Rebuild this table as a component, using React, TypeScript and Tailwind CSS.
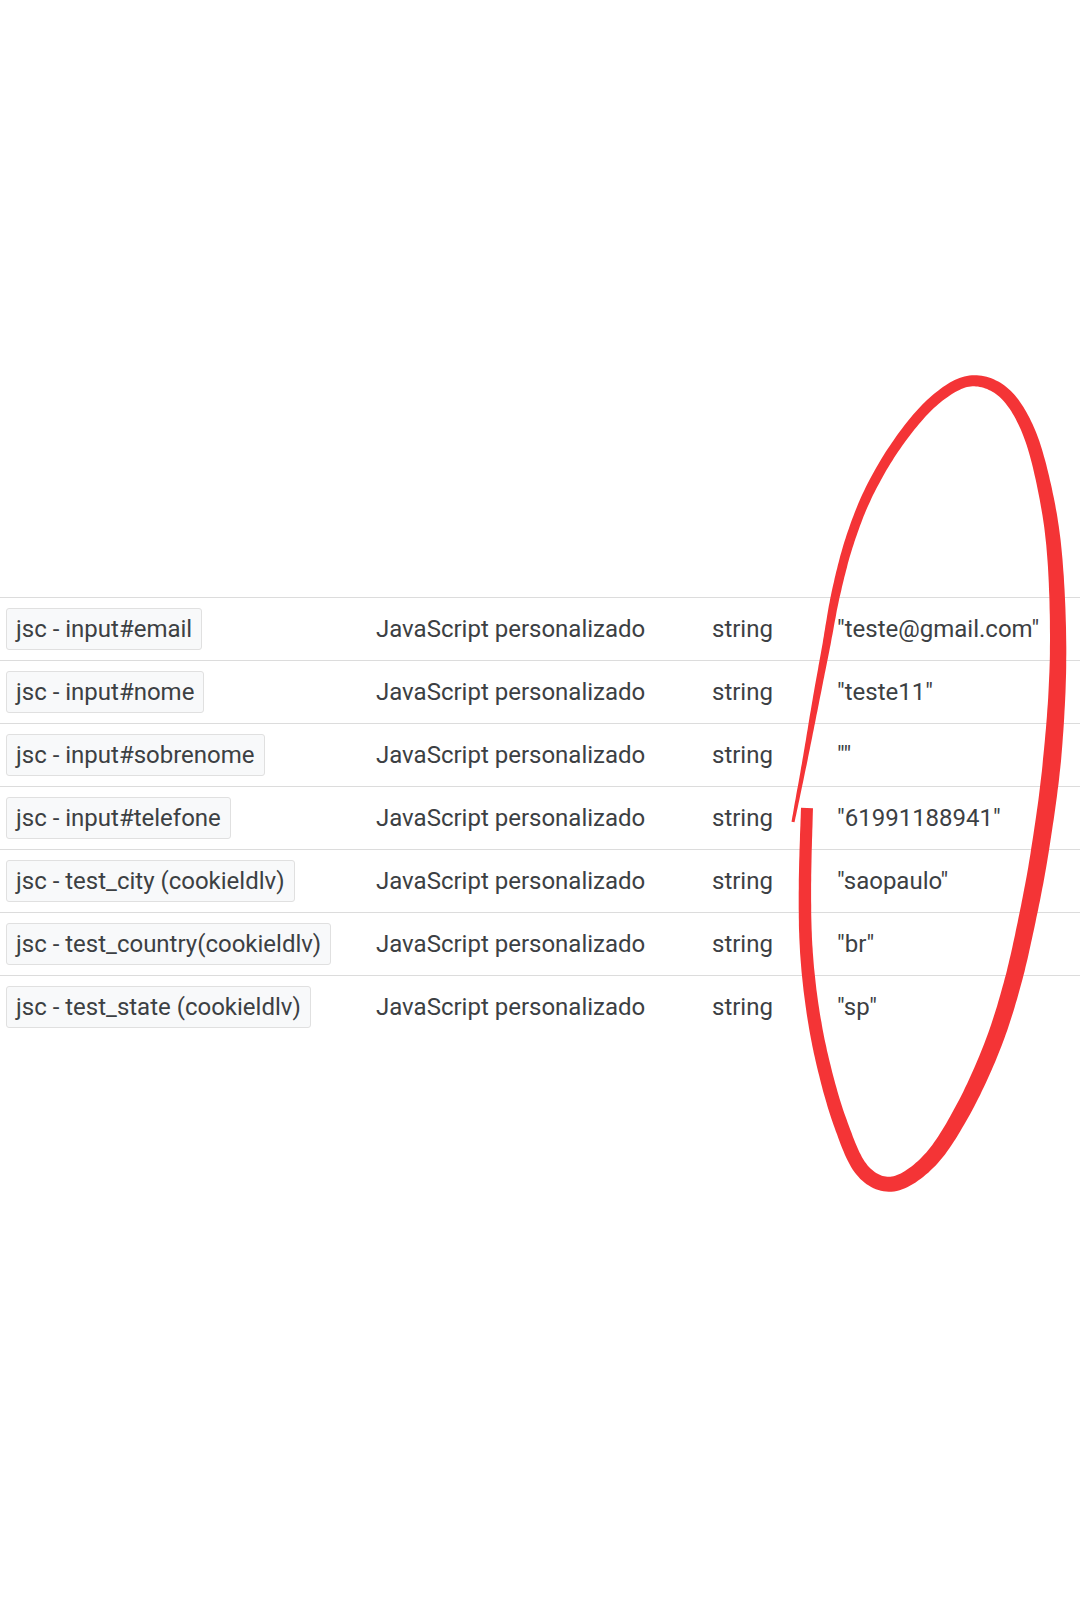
import React from 'react';

type Row = { name: string; type: string; format: string; value: string };

const ROWS: Row[] = [
  { name: 'jsc - input#email', type: 'JavaScript personalizado', format: 'string', value: '"teste@gmail.com"' },
  { name: 'jsc - input#nome', type: 'JavaScript personalizado', format: 'string', value: '"teste11"' },
  { name: 'jsc - input#sobrenome', type: 'JavaScript personalizado', format: 'string', value: '""' },
  { name: 'jsc - input#telefone', type: 'JavaScript personalizado', format: 'string', value: '"61991188941"' },
  { name: 'jsc - test_city (cookieldlv)', type: 'JavaScript personalizado', format: 'string', value: '"saopaulo"' },
  { name: 'jsc - test_country(cookieldlv)', type: 'JavaScript personalizado', format: 'string', value: '"br"' },
  { name: 'jsc - test_state (cookieldlv)', type: 'JavaScript personalizado', format: 'string', value: '"sp"' },
];

// centre line of the hand-drawn loop, full page coordinates
const LOOP: [number, number][] = [
  [793, 822], [805, 760], [816, 700], [826, 647], [836, 593], [850, 540], [870, 490], [900, 440],
  [935, 400], [970, 381], [1003, 392], [1028, 430], [1045, 490], [1055, 560], [1058, 660], [1052, 760],
  [1040, 850], [1027, 920], [1012, 985], [992, 1047], [963, 1110], [930, 1160], [893, 1184], [862, 1170],
  [840, 1122], [823, 1063], [812, 1005], [806, 945], [805, 880], [807, 808],
];

// stroke width at given point index
const WIDTHS: [number, number][] = [
  [0, 3], [2, 7], [4, 9], [6, 10], [9, 11], [13, 15], [15, 18], [19, 17], [22, 15], [26, 13], [29, 12],
];

function widthAt(s: number) {
  for (let i = 0; i < WIDTHS.length - 1; i++) {
    const [a, wa] = WIDTHS[i];
    const [b, wb] = WIDTHS[i + 1];
    if (s >= a && s <= b) return wa + ((s - a) / (b - a)) * (wb - wa);
  }
  return WIDTHS[WIDTHS.length - 1][1];
}

function loopPath() {
  const pts: { x: number; y: number; s: number }[] = [];
  const n = LOOP.length;
  const get = (i: number) => LOOP[Math.max(0, Math.min(n - 1, i))];
  for (let i = 0; i < n - 1; i++) {
    const p0 = get(i - 1), p1 = get(i), p2 = get(i + 1), p3 = get(i + 2);
    const steps = 16;
    for (let k = 0; k < steps; k++) {
      const t = k / steps;
      const t2 = t * t, t3 = t2 * t;
      const f = (a: number, b: number, c: number, d: number) =>
        0.5 * (2 * b + (-a + c) * t + (2 * a - 5 * b + 4 * c - d) * t2 + (-a + 3 * b - 3 * c + d) * t3);
      pts.push({ x: f(p0[0], p1[0], p2[0], p3[0]), y: f(p0[1], p1[1], p2[1], p3[1]), s: i + t });
    }
  }
  pts.push({ x: LOOP[n - 1][0], y: LOOP[n - 1][1], s: n - 1 });

  const left: string[] = [];
  const right: string[] = [];
  pts.forEach((p, i) => {
    const a = pts[Math.max(0, i - 2)];
    const b = pts[Math.min(pts.length - 1, i + 2)];
    const dx = b.x - a.x, dy = b.y - a.y;
    const len = Math.hypot(dx, dy) || 1;
    const nx = -dy / len, ny = dx / len;
    const w = widthAt(p.s) / 2;
    left.push(`${(p.x + nx * w).toFixed(1)},${(p.y + ny * w).toFixed(1)}`);
    right.unshift(`${(p.x - nx * w).toFixed(1)},${(p.y - ny * w).toFixed(1)}`);
  });
  return `M${left.join(' L')} L${right.join(' L')} Z`;
}

export default function App() {
  return (
    <div className="relative w-[1080px] h-[1620px] bg-white overflow-hidden font-['Roboto','Liberation_Sans',sans-serif] text-[#3c4043]">
      <div className="pt-[597px]">
        {ROWS.map((r) => (
          <div key={r.name} className="grid grid-cols-[376px_336px_125px_1fr] items-center h-[63px] border-t border-[#dcdcdc] text-[24px]">
            <div className="pl-[6px]">
              <span className="inline-flex items-center h-[42px] px-[9px] bg-[#f8f9fa] border border-[#e0e0e0] rounded-[3px] whitespace-nowrap">
                {r.name}
              </span>
            </div>
            <div className="whitespace-nowrap">{r.type}</div>
            <div>{r.format}</div>
            <div className="whitespace-nowrap">{r.value}</div>
          </div>
        ))}
      </div>

      {/* red marker loop drawn over the values column */}
      <svg className="absolute inset-0 pointer-events-none" width="1080" height="1620" viewBox="0 0 1080 1620">
        <path d={loopPath()} fill="#f43436" />
      </svg>
    </div>
  );
}
